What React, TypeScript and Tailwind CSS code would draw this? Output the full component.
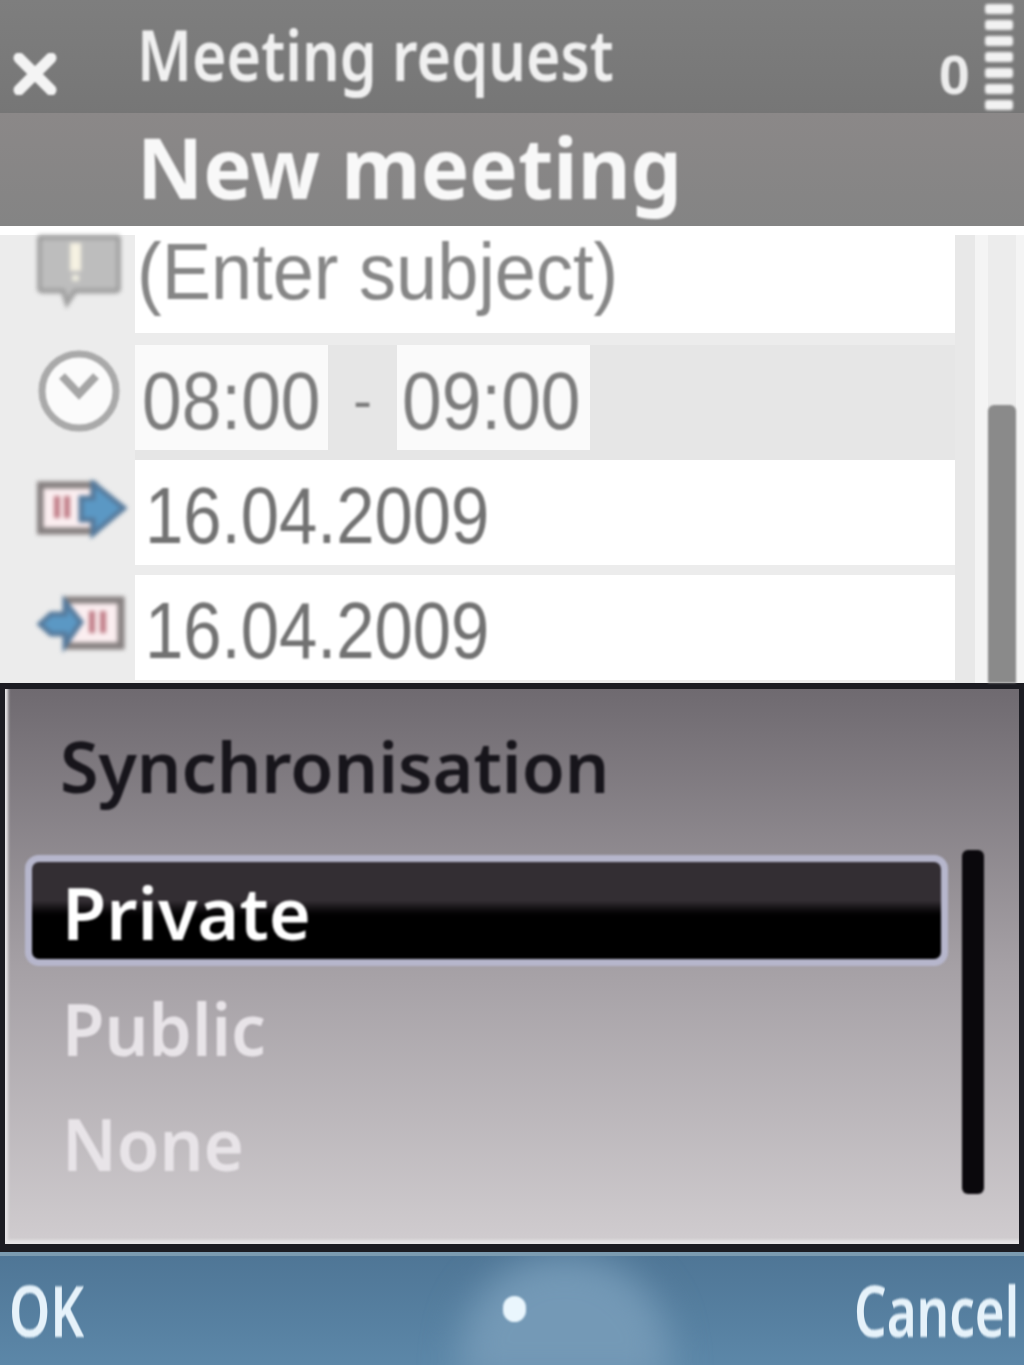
const sans = "font-['Liberation_Sans',sans-serif]";
const noto = "font-['Noto_Sans',sans-serif]";

const CloseIcon = () => (
  <svg width="44" height="42" viewBox="0 0 44 42" className="blur-[1px]">
    <path d="M6 5 L38 37 M38 5 L6 37" stroke="#f4f4f4" strokeWidth="11" strokeLinecap="round" />
  </svg>
);

const SubjectIcon = () => (
  <svg width="84" height="76" viewBox="0 0 84 76" className="blur-[2px]">
    <path d="M6 2 H78 Q82 2 82 6 V52 Q82 56 78 56 H38 L30 68 L26 56 H6 Q2 56 2 52 V6 Q2 2 6 2 Z" fill="#bdbdbd" stroke="#a0a0a0" strokeWidth="5" />
    <rect x="33" y="8" width="11" height="28" fill="#f6f2e2" />
    <rect x="35" y="40" width="7" height="6" fill="#f0eee0" />
  </svg>
);

const ClockIcon = () => (
  <svg width="84" height="84" viewBox="0 0 84 84" className="blur-[1px]">
    <circle cx="42" cy="42" r="37" fill="#fbfbfb" stroke="#a9a9a9" strokeWidth="7" />
    <path d="M25 27 L42 45 L59 27" fill="none" stroke="#a5a5a5" strokeWidth="8" />
  </svg>
);

const StartIcon = () => (
  <svg width="90" height="60" viewBox="0 0 90 60" className="blur-[2px]">
    <rect x="3" y="5" width="54" height="46" fill="#fbeef0" stroke="#857f7f" strokeWidth="7" />
    <rect x="17" y="16" width="6" height="22" fill="#c07c86" />
    <rect x="27" y="16" width="6" height="22" fill="#c07c86" />
    <path d="M44 18 H56 V3 L87 28 L56 54 V40 H44 Z" fill="#5b98c4" stroke="#55799b" strokeWidth="5" />
  </svg>
);

const EndIcon = () => (
  <svg width="90" height="60" viewBox="0 0 90 60" className="blur-[2px]">
    <rect x="30" y="5" width="54" height="46" fill="#fbeef0" stroke="#857f7f" strokeWidth="7" />
    <rect x="52" y="16" width="6" height="22" fill="#c07c86" />
    <rect x="63" y="16" width="6" height="22" fill="#c07c86" />
    <path d="M3 29 L14 19 H28 V7 L44 27 L28 50 V39 H14 Z" fill="#5b98c4" stroke="#55799b" strokeWidth="5" />
  </svg>
);

const SignalBars = () => (
  <div className="flex flex-col gap-[6px] blur-[1.5px]">
    {[0, 1, 2, 3, 4, 5, 6].map((bar) => (
      <div key={bar} className="w-[28px] h-[10px] rounded-[3px] bg-[#f2f2f2]" />
    ))}
  </div>
);

const App = () => {
  return (
    <div className={`w-[1024px] h-[1365px] flex flex-col overflow-hidden bg-white ${sans}`}>
      {/* Title pane */}
      <div className="h-[113px] shrink-0 flex bg-gradient-to-b from-[#7e7e7e] to-[#767676]">
        <div className="w-[137px] shrink-0 pl-[13px] pt-[53px]">
          <CloseIcon />
        </div>
        <h1 className={`flex-1 pt-[16px] text-[70px] leading-[76px] font-semibold text-[#f0f0f0] blur-[1px] ${noto}`}>
          <span className="inline-block origin-left scale-x-[0.845]">Meeting request</span>
        </h1>
        <div className="flex items-start pr-[11px] pt-[4px]">
          <span className="mt-[38px] mr-[15px] text-[56px] leading-[66px] font-bold text-[#ececec] inline-block blur-[1px]">0</span>
          <SignalBars />
        </div>
      </div>

      <div className="h-[113px] shrink-0 pl-[137px] bg-gradient-to-b from-[#8b8888] to-[#848484]">
        <h2 className={`pt-[6px] text-[84px] leading-[96px] font-bold text-[#f8f8f8] blur-[1px] ${noto}`}>
          <span className="inline-block origin-left scale-x-[0.97]">New meeting</span>
        </h2>
      </div>

      {/* Form */}
      <div className="h-[457px] shrink-0 flex bg-[#ececec] border-t-[9px] border-white">
        <div className="flex-1 flex flex-col">
          <div className="h-[98px] flex">
            <div className="w-[135px] shrink-0 pl-[37px]"><SubjectIcon /></div>
            <div className="flex-1 bg-white pl-[2px] text-[80px] leading-[74px] text-[#868686]">
              <span className="inline-block origin-left scale-x-[0.925] blur-[1px]">(Enter subject)</span>
            </div>
          </div>
          <div className="h-[115px] mt-[12px] flex">
            <div className="w-[135px] shrink-0 pl-[37px] pt-[4px]"><ClockIcon /></div>
            <div className="flex-1 flex bg-[#e6e6e6] text-[82px] leading-[112px] text-[#7c7c7c]">
              <div className="w-[193px] h-[105px] bg-[#fafafa] pl-[7px]"><span className="inline-block origin-left scale-x-[0.87] blur-[1px]">08:00</span></div>
              <div className="w-[69px] text-center text-[56px] blur-[1px]">-</div>
              <div className="w-[193px] h-[105px] bg-[#fafafa] pl-[5px]"><span className="inline-block origin-left scale-x-[0.87] blur-[1px]">09:00</span></div>
            </div>
          </div>
          <div className="h-[105px] flex">
            <div className="w-[135px] shrink-0 pl-[37px] pt-[20px]"><StartIcon /></div>
            <div className="flex-1 bg-white pl-[10px] text-[80px] leading-[112px] text-[#727272]"><span className="inline-block origin-left scale-x-[0.86] blur-[1px]">16.04.2009</span></div>
          </div>
          <div className="h-[105px] mt-[10px] flex">
            <div className="w-[135px] shrink-0 pl-[37px] pt-[20px]"><EndIcon /></div>
            <div className="flex-1 bg-white pl-[10px] text-[80px] leading-[112px] text-[#727272]"><span className="inline-block origin-left scale-x-[0.86] blur-[1px]">16.04.2009</span></div>
          </div>
        </div>
        {/* Scrollbar */}
        <div className="w-[69px] shrink-0 flex">
          <div className="w-[20px] bg-[#e8e8e8]" />
          <div className="w-[13px] bg-[#f4f4f4]" />
          <div className="w-[28px] mt-[170px] rounded-t-[6px] bg-[#8a8a8a] blur-[1px]" />
          <div className="flex-1 bg-[#f4f4f4]" />
        </div>
      </div>

      {/* Popup list */}
      <div className={`h-[569px] shrink-0 flex flex-col border-x-[5px] border-t-[6px] border-b-[8px] border-[#1c1c22] bg-gradient-to-b from-[#6f6a70] via-[#a5a0a5] to-[#d0cccf] shadow-[inset_4px_-5px_3px_-1px_#e6e4e6] pl-[20px] pr-[35px] ${noto}`}>
        <div className="h-[166px] shrink-0 pl-[35px] pt-[37px] text-[70px] leading-[80px] font-semibold text-[#17151b] blur-[1px]">
          Synchronisation
        </div>
        <div className="flex flex-1">
          <div className="w-[923px] shrink-0 flex flex-col">
            <div className="h-[111px] rounded-[14px] border-[7px] border-[#b6b6cc] bg-gradient-to-b from-[#332e33] from-40% to-[#000000] to-60% pl-[30px] pt-[10px] text-[72px] leading-[80px] font-semibold text-white blur-[1px]">
              Private
            </div>
            <div className="pl-[37px] pt-[22px] text-[72px] leading-[80px] font-semibold text-[#e8e4e8] blur-[1px]">
              <span className="inline-block origin-left scale-x-[0.96]">Public</span>
            </div>
            <div className="pl-[37px] pt-[35px] text-[72px] leading-[80px] font-semibold text-[#e8e4e8] blur-[1px]">
              <span className="inline-block origin-left scale-x-[0.96]">None</span>
            </div>
          </div>
          <div className="ml-[14px] w-[22px] h-[344px] -mt-[5px] rounded-[6px] bg-[#0a080c] blur-[1px]" />
        </div>
      </div>

      {/* Softkeys */}
      <div className={`relative flex-1 overflow-hidden flex justify-between items-start bg-gradient-to-b from-[#4f7696] to-[#5c87a8] border-t-[4px] border-[#7b9bb0] pl-[9px] pr-[5px] pt-[14px] text-[70px] leading-[80px] font-semibold text-[#e6f2fa] ${noto}`}>
        <div className="absolute left-[460px] top-[0px] w-[210px] h-[130px] rounded-t-[100px] bg-[#7499b6] blur-[18px]" />
        <span className="relative inline-block origin-left scale-x-[0.75] blur-[1px]">OK</span>
        <span className="absolute left-[503px] top-[40px] w-[23px] h-[26px] rounded-full bg-[#eaf6fd] blur-[1px]" />
        <span className="relative inline-block origin-right scale-x-[0.73] blur-[1px]">Cancel</span>
      </div>
    </div>
  );
};

export default App;
